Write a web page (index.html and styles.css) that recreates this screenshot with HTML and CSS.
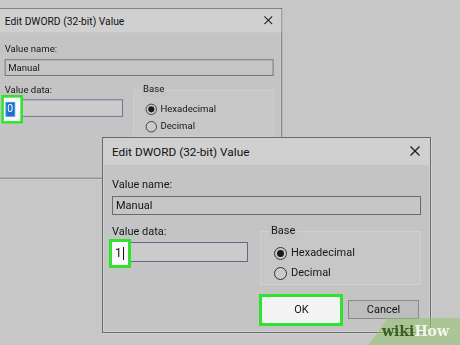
FILE: index.html
```html
<!DOCTYPE html>
<html>
<head>
<meta charset="utf-8">
<link rel="stylesheet" href="styles.css">
</head>
<body>
<div class="desk">
  <div class="dlg back">
    <div class="titlebar">
      <span class="title">Edit DWORD (32-bit) Value</span>
      <svg class="close" viewBox="0 0 10 10"><path d="M0.5 0.5L9.5 9.5M9.5 0.5L0.5 9.5"/></svg>
    </div>
    <div class="body">
      <div class="label">Value name:</div>
      <div class="field name">Manual</div>
      <div class="row">
        <div class="col-data">
          <div class="label">Value data:</div>
          <div class="field data">
            <span class="hl hl-sel"><span class="sel">0</span></span>
          </div>
        </div>
        <div class="base">
          <span class="legend">Base</span>
          <div class="radio on"><span class="dot"></span>Hexadecimal</div>
          <div class="radio"><span class="dot"></span>Decimal</div>
        </div>
      </div>
    </div>
  </div>

  <div class="dlg front">
    <div class="titlebar">
      <span class="title">Edit DWORD (32-bit) Value</span>
      <svg class="close" viewBox="0 0 10 10"><path d="M0.5 0.5L9.5 9.5M9.5 0.5L0.5 9.5"/></svg>
    </div>
    <div class="body">
      <div class="label">Value name:</div>
      <div class="field name">Manual</div>
      <div class="row">
        <div class="col-data">
          <div class="label">Value data:</div>
          <div class="field data">
            <span class="hl hl-one">1<span class="caret"></span></span>
          </div>
        </div>
        <div class="base">
          <span class="legend">Base</span>
          <div class="radio on"><span class="dot"></span>Hexadecimal</div>
          <div class="radio"><span class="dot"></span>Decimal</div>
        </div>
      </div>
      <div class="buttons">
        <span class="btn ok"><span class="ring"></span>OK</span>
        <span class="btn">Cancel</span>
      </div>
    </div>
  </div>

  <div class="wm"><span class="wiki">wiki</span><span class="how">How</span></div>
</div>
</body>
</html>
```

FILE: styles.css
```css
* { box-sizing: border-box; }
html, body { margin: 0; padding: 0; }
body { background: #c8c8c8; width: 460px; height: 345px; overflow: hidden; }

.desk {
  position: relative;
  width: 460px;
  height: 345px;
  background: #c7c7c7;
  font-family: Roboto, "Noto Sans", sans-serif;
  color: #141414;
  overflow: hidden;
}

.dlg {
  position: absolute;
  width: 329px;
  height: 196px;
  background: #c4c4c4;
  border: 1px solid #6a6a6a;
  box-shadow: inset 0 0 0 1px #d2d2d2, 1px 1px 0 #d4d4d4;
  display: flex;
  flex-direction: column;
}
.front { left: 102px; top: 137px; }
.back { left: -4px; top: 8px; transform: scale(0.87); transform-origin: 0 0; }

.titlebar {
  height: 27px;
  flex: none;
  background: #d0d0d0;
  display: flex;
  align-items: center;
  justify-content: space-between;
  padding: 0 10px 0 9px;
}
.title { font-size: 11.8px; line-height: 16px; color: #121212; }
.close { width: 10px; height: 10px; stroke: #1a1a1a; stroke-width: 1.2; fill: none; margin-top: -1px; }

.body { padding: 12px 0 0 9px; display: flex; flex-direction: column; }
.label { font-size: 11px; line-height: 16px; color: #161616; }
.field {
  border: 1px solid #6b6b6b;
  background: #c6c6c6;
  font-size: 11px;
  line-height: 17px;
  padding-left: 3px;
  color: #141414;
}
.name { width: 309px; height: 19px; margin-top: 3px; }

.row { display: flex; margin-top: 9px; }
.col-data { width: 136px; }
.data {
  position: relative;
  height: 20px;
  margin-top: 2px;
  border-color: #5d6a8a;
  background: #cbcbcb;
}

.hl {
  position: absolute;
  background: #fafafa;
  border: 3px solid #2fe22f;
  display: flex;
  align-items: center;
}
.hl-one { left: -4px; top: -4px; width: 22px; height: 29px; padding-left: 3px; font-size: 12px; color: #111; }
.caret { width: 1px; height: 13px; background: #111; margin-left: 1px; }
.hl-sel { left: -5px; top: -6px; width: 25px; height: 33px; padding-left: 2px; }
.sel { background: #1a6fd0; color: #fff; font-size: 12px; line-height: 15px; padding: 0 1px; border: 1px dotted #9cc4ef; }

.base {
  position: relative;
  margin-left: 12px;
  margin-top: 7px;
  width: 161px;
  height: 54px;
  border: 1px solid #d0d0d0;
  background: #c7c7c7;
  padding: 11px 0 0 13px;
}
.legend {
  position: absolute;
  left: 8px;
  top: -9px;
  font-size: 11px;
  line-height: 16px;
  padding: 0 2px;
  background: #c4c4c4;
  color: #161616;
}
.radio { display: flex; align-items: center; font-size: 11px; line-height: 16px; height: 20px; color: #161616; }
.dot {
  width: 13px; height: 13px;
  border: 1px solid #333;
  border-radius: 50%;
  margin-right: 4px;
  background: #cacaca;
  display: flex; align-items: center; justify-content: center;
}
.radio.on .dot::after {
  content: "";
  width: 7px; height: 7px; border-radius: 50%;
  background: #1a1a1a;
}

.buttons { display: flex; justify-content: flex-end; gap: 11px; margin-top: 15px; padding-right: 11px; }
.btn {
  position: relative;
  width: 71px; height: 19px;
  border: 1px solid #8a8a8a;
  background: #bdbdbd;
  font-size: 11px;
  line-height: 17px;
  text-align: center;
  color: #141414;
}
.btn.ok {
  background: #e4e4e4;
  border: 2px solid #1e64b8;
  line-height: 15px;
  z-index: 0;
}
.ring {
  position: absolute;
  left: -9px; top: -8px; right: -8px; bottom: -9px;
  border: 3px solid #2fe22f;
  background: #f4f4f4;
  z-index: -1;
}

.wm {
  position: absolute;
  right: 0; bottom: 0;
  width: 92px; height: 27px;
  background: rgba(150, 195, 110, 0.55);
  clip-path: polygon(20px 0, 100% 0, 100% 100%, 0 100%);
  font-family: "DejaVu Serif", "Liberation Serif", serif;
  font-weight: bold;
  font-size: 14px;
  line-height: 27px;
  padding-left: 14px;
}
.wiki { color: #3a5e24; }
.how { color: #f2f7ee; }
```
